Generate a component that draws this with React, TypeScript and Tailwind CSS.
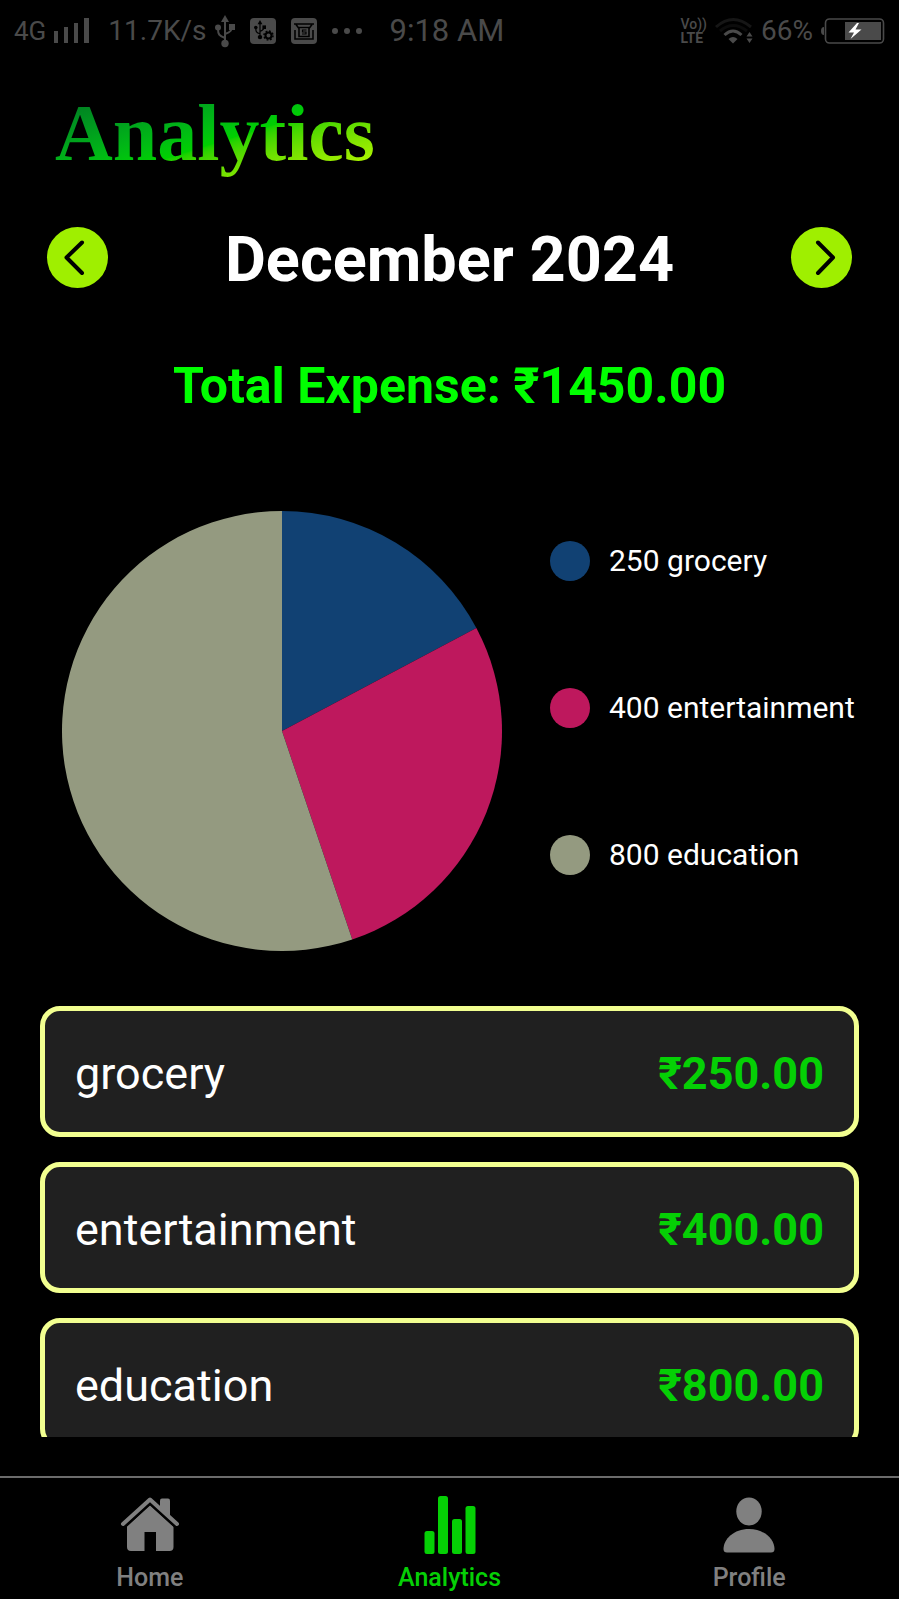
type Expense = { name: string; amount: number; color: string };

const expenses: Expense[] = [
  { name: 'grocery', amount: 250, color: '#114173' },
  { name: 'entertainment', amount: 400, color: '#be185d' },
  { name: 'education', amount: 800, color: '#949a80' },
];

const total = expenses.reduce((sum, e) => sum + e.amount, 0);

function pointAt(fraction: number) {
  const angle = fraction * 2 * Math.PI;
  return `${110 + 110 * Math.sin(angle)} ${110 - 110 * Math.cos(angle)}`;
}

function PieChart() {
  let start = 0;
  return (
    <svg viewBox="0 0 220 220" className="w-[440px] min-w-0 shrink" role="img" aria-label="Expenses by category">
      {expenses.map((e) => {
        const end = start + e.amount / total;
        const d = `M110 110L${pointAt(start)}A110 110 0 ${end - start > 0.5 ? 1 : 0} 1 ${pointAt(end)}Z`;
        start = end;
        return <path key={e.name} d={d} fill={e.color} />;
      })}
    </svg>
  );
}

function UsbGlyph() {
  return (
    <>
      <path d="M10 4v24M10 23C4 21 3 19 3 14M10 19c6-2 7-4 7-8" fill="none" stroke="currentColor" strokeWidth="2" />
      <path d="M10 0l4 7H6z" />
      <circle cx="3" cy="12.500" r="3" />
      <path d="M14 9h6v6h-6z" />
      <circle cx="10" cy="28.500" r="3.700" />
    </>
  );
}

function StatusBar() {
  return (
    <div className="flex h-[62px] shrink-0 items-center pr-[14px] pl-[14px] text-[#4a4a4a]">
      <span className="text-[26px] leading-8">4G</span>
      <svg viewBox="0 0 36 26" className="ml-2 h-[26px] w-9" fill="currentColor" aria-hidden="true">
        <path d="M0 13h4v12H0zM10 9h4v16h-4zM20 5h4v20h-4zM30 0h5v25h-5z" />
      </svg>
      <span className="ml-[18px] text-[28px] leading-8">11.7K/s</span>
      <svg viewBox="0 0 20 33" className="ml-2 h-[33px] w-5" fill="currentColor" aria-hidden="true">
        <UsbGlyph />
      </svg>
      <svg viewBox="0 0 26 26" className="ml-[15px] size-[26px]" aria-hidden="true">
        <rect width="26" height="26" rx="4" fill="#4a4a4a" />
        <g transform="translate(4 2) scale(.6)" fill="#000" color="#000">
          <UsbGlyph />
        </g>
        <circle cx="18.500" cy="17.500" r="5.500" fill="#4a4a4a" />
        <circle cx="18.500" cy="17.500" r="3" fill="none" stroke="#000" strokeWidth="2" />
        <circle cx="18.500" cy="17.500" r="4.500" fill="none" stroke="#000" strokeWidth="1.500" strokeDasharray="1.800 1.730" />
      </svg>
      <svg viewBox="0 0 26 26" className="ml-[15px] size-[26px]" aria-hidden="true">
        <rect width="26" height="26" rx="4" fill="#4a4a4a" />
        <path d="M3 6h20M5 6.500l3 4v8h10v-8l3-4M4 12v9h18v-9" fill="none" stroke="#000" strokeWidth="1.600" />
        <path d="M8 9.500h10" stroke="#000" strokeWidth="1.400" />
        <path d="M15.500 12h-4v2h3.500v2h-4" fill="none" stroke="#000" strokeWidth="1.200" />
      </svg>
      <svg viewBox="0 0 30 6" className="ml-[15px] h-[6px] w-[30px]" fill="currentColor" aria-hidden="true">
        <circle cx="3" cy="3" r="3" />
        <circle cx="15" cy="3" r="3" />
        <circle cx="27" cy="3" r="3" />
      </svg>
      <span className="ml-[28px] text-[31px] leading-9">9:18 AM</span>
      <div className="ml-auto flex items-center">
        <span className="flex flex-col text-[14px] leading-[14px] font-medium">
          <span>Vo))</span>
          <span className="font-bold">LTE</span>
        </span>
        <svg viewBox="0 0 38 28" className="ml-2 h-7 w-[38px]" fill="none" strokeWidth="3" aria-hidden="true">
          <path d="M1 10q17-15 35 0" stroke="#161616" />
          <path d="M5 14q13-11 27 0" stroke="#0c0c0c" />
          <path d="M9.500 18q8.500-8 17 0" stroke="#4a4a4a" />
          <path d="M13.500 22q4.500-4 9 0L18 26.500z" fill="#4a4a4a" />
          <path d="M34.500 15l3 4.500h-6zM34.500 26l3-4.500h-6z" fill="#4a4a4a" />
        </svg>
        <span className="ml-2 text-[28px] leading-8">66%</span>
        <svg viewBox="0 0 64 26" className="ml-2 h-[26px] w-16" aria-hidden="true">
          <path d="M3 9Q0 9 0 13t3 4z" fill="#4a4a4a" />
          <rect x="4.500" y="1" width="58" height="24" rx="4" fill="none" stroke="#4a4a4a" strokeWidth="1.600" />
          <rect x="24" y="4" width="36" height="18" fill="#4a4a4a" />
          <path d="M36 5l-8.500 9.500h5.500L29.500 21l11-9.500H34.500L38 5z" fill="#fff" />
        </svg>
      </div>
    </div>
  );
}

function MonthButton({ label, path }: { label: string; path: string }) {
  return (
    <button type="button" aria-label={label} className="flex size-[61px] items-center justify-center rounded-full bg-[#9fef00]">
      <svg viewBox="0 0 61 61" className="size-full" fill="none" stroke="#000" strokeWidth="4" strokeLinecap="round" strokeLinejoin="round" aria-hidden="true">
        <path d={path} />
      </svg>
    </button>
  );
}

function BottomNav() {
  const item = 'flex flex-1 flex-col items-center gap-2 pt-4 text-[25px] leading-7 font-medium';
  return (
    <nav className="flex h-[123px] shrink-0 border-t-2 border-[#6b6b6b]">
      <a href="#home" className={`${item} text-[#808080]`}>
        <svg viewBox="0 0 60 62" className="h-[62px] w-[60px]" fill="currentColor" aria-hidden="true">
          <path d="M30 11L53.500 32.500V53q0 4-4 4H36V38H24.500v19H11q-4 0-4-4V32.500z" />
          <path d="M3 30L30 5.500 57 30" fill="none" stroke="#000" strokeWidth="9" />
          <path d="M40 6.500q0-2 2-2h6q2 0 2 2v17L40 14.500z" />
          <path d="M3 30L30 5.500 57 30" fill="none" stroke="currentColor" strokeWidth="4" strokeLinecap="round" strokeLinejoin="round" />
        </svg>
        Home
      </a>
      <a href="#analytics" aria-current="page" className={`${item} text-[#05d005]`}>
        <svg viewBox="0 0 60 62" className="h-[62px] w-[60px]" fill="currentColor" aria-hidden="true">
          <rect x="4.500" y="37" width="10" height="23" rx="2.500" />
          <rect x="18" y="2" width="10" height="58" rx="2.500" />
          <rect x="32" y="25" width="10" height="35" rx="2.500" />
          <rect x="45.500" y="12" width="10" height="48" rx="2.500" />
        </svg>
        Analytics
      </a>
      <a href="#profile" className={`${item} text-[#808080]`}>
        <svg viewBox="0 0 60 62" className="h-[62px] w-[60px]" fill="currentColor" aria-hidden="true">
          <ellipse cx="30" cy="17.500" rx="12.700" ry="14" />
          <path d="M8 58.500Q4.500 58.500 4.500 55C4.500 45 15 35 30 35s25.500 10 25.500 20q0 3.500-3.500 3.500z" />
        </svg>
        Profile
      </a>
    </nav>
  );
}

export default function App() {
  return (
    <div className="flex h-screen flex-col overflow-hidden bg-black font-[Roboto,sans-serif] text-white">
      <StatusBar />
      <main className="flex min-h-0 flex-1 flex-col">
        <h1 className="mt-[21px] ml-[55px] self-start bg-linear-to-br from-[#007a22] from-10% via-[#00d000] via-55% to-[#b0f400] to-90% bg-clip-text font-['Liberation_Serif',serif] text-[80px] leading-[100px] font-bold text-transparent">
          Analytics
        </h1>
        <div className="mt-[35px] flex items-center justify-between px-[47px]">
          <MonthButton label="Previous month" path="M35 15.500L19.500 30.500 35 46" />
          <h2 className="pt-[6px] text-[63px] leading-[72px] font-bold">December 2024</h2>
          <MonthButton label="Next month" path="M27 15.500L42 30.500 27 46" />
        </div>
        <p className="mt-[62px] text-center text-[50px] leading-[56px] font-bold text-[#00ff00]">
          Total Expense: ₹{total.toFixed(2)}
        </p>
        <div className="mt-[97px] flex items-start gap-12 pl-[62px]">
          <PieChart />
          <ul className="flex shrink-0 flex-col gap-[107px] pt-[30px]">
            {expenses.map((e) => (
              <li key={e.name} className="flex h-10 items-center gap-[19px] text-[30px] leading-10">
                <span className="size-10 rounded-full" style={{ backgroundColor: e.color }} />
                {e.amount} {e.name}
              </li>
            ))}
          </ul>
        </div>
        <ul className="mt-[55px] mb-[39px] flex min-h-0 flex-1 flex-col gap-[25px] overflow-hidden px-10">
          {expenses.map((e) => (
            <li
              key={e.name}
              className="flex h-[131px] shrink-0 items-center justify-between rounded-[20px] border-5 border-[#f2ff90] bg-[#202020] px-[30px] pt-1 text-[45px] leading-[54px]"
            >
              <span>{e.name}</span>
              <span className="font-bold text-[#05d005]">₹{e.amount.toFixed(2)}</span>
            </li>
          ))}
        </ul>
      </main>
      <BottomNav />
    </div>
  );
}
